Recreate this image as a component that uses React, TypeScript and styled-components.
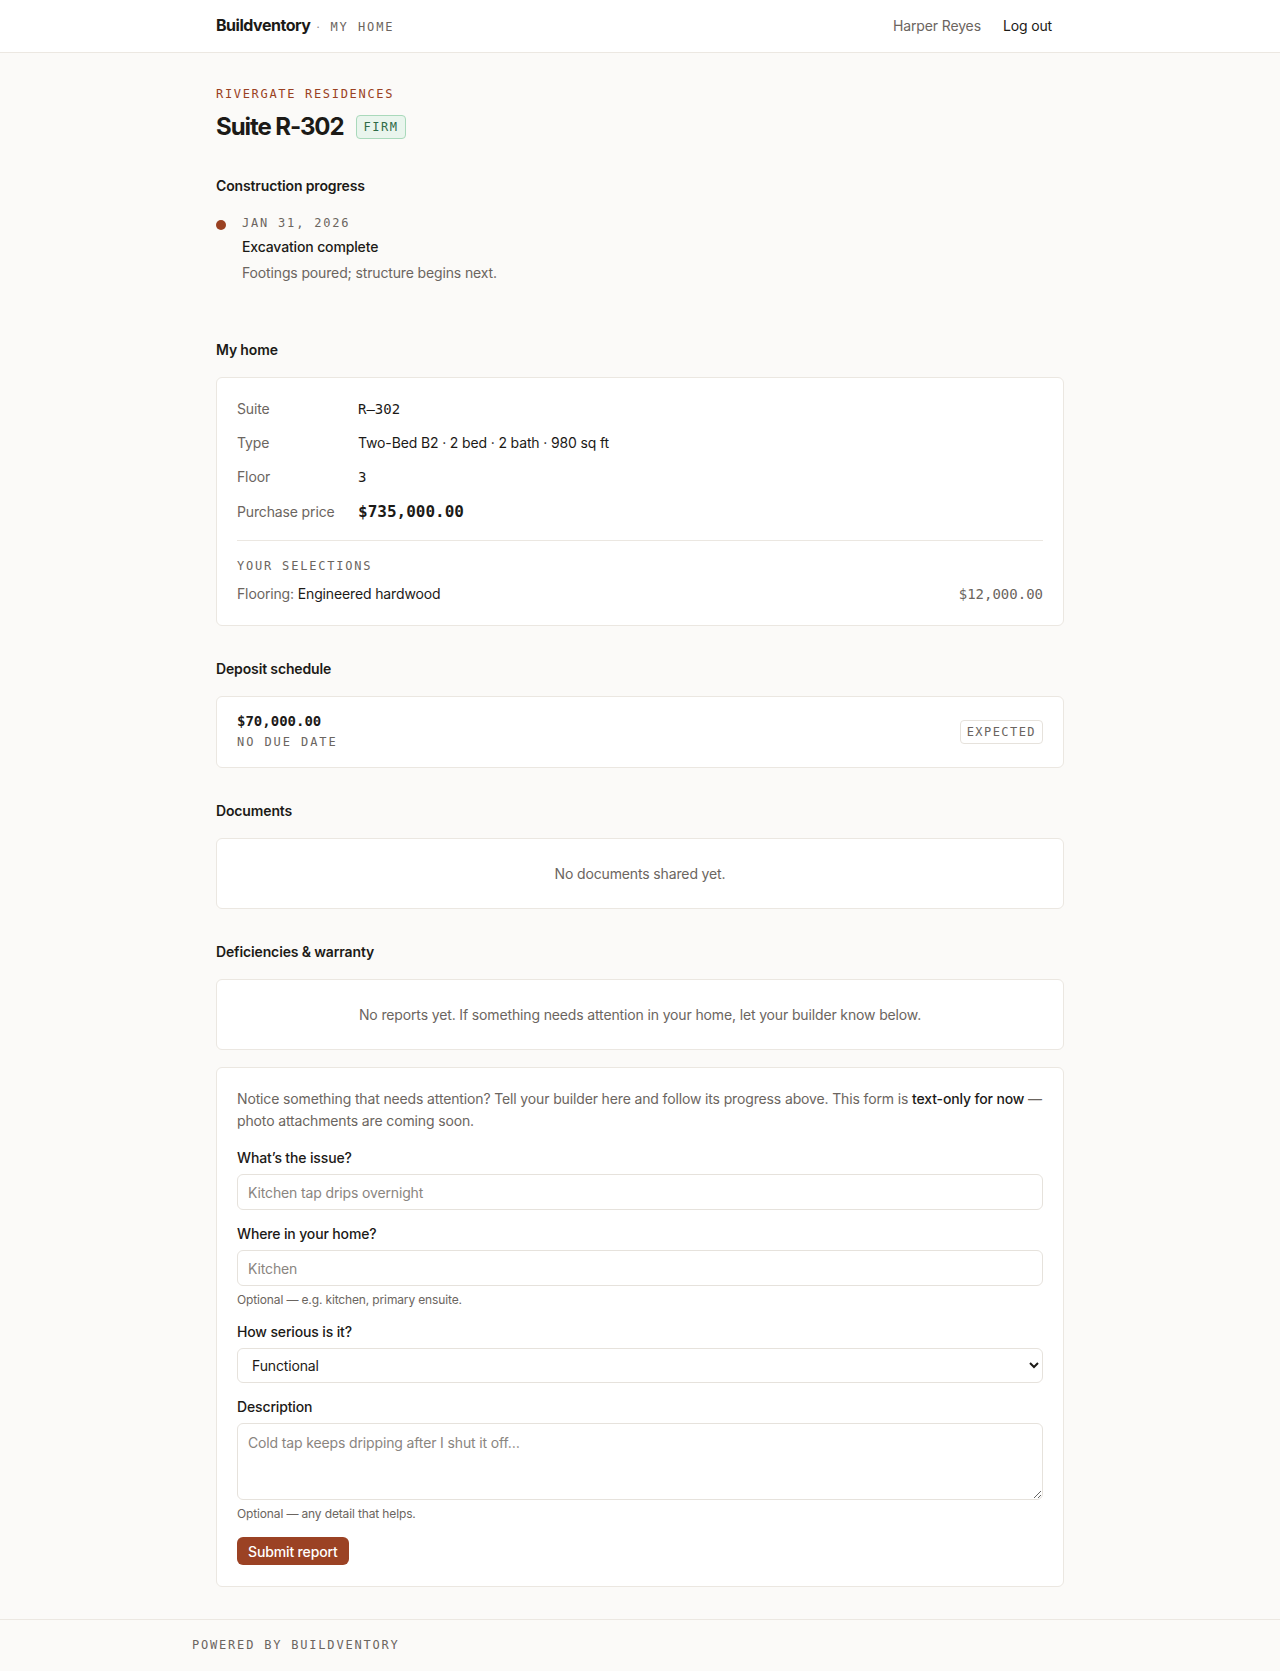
import styled, { createGlobalStyle } from 'styled-components'

const GlobalStyle = createGlobalStyle`
  * { box-sizing: border-box; }
  body {
    margin: 0;
    background: #fbfaf8;
    color: #1c1a17;
    font-family: Inter, "Noto Sans", sans-serif;
    font-size: 14px;
    line-height: 20px;
    letter-spacing: -0.01em;
  }
`

const mono = `"DejaVu Sans Mono", "Liberation Mono", monospace`

const Header = styled.header`
  background: #ffffff;
  border-bottom: 1px solid #ece8e2;
`

const HeaderInner = styled.div`
  max-width: 880px;
  margin: 0 auto;
  padding: 0 16px;
  height: 52px;
  display: flex;
  align-items: center;
  justify-content: space-between;
`

const BrandGroup = styled.div`
  display: flex;
  align-items: baseline;
  gap: 6px;
`

const Brand = styled.span`
  font-size: 16px;
  font-weight: 700;
  letter-spacing: -0.03em;
  color: #1c1a17;
`

const BrandDot = styled.span`
  font-size: 11px;
  color: #8a847d;
`

const Area = styled.span`
  font-family: ${mono};
  font-size: 12px;
  letter-spacing: 0.16em;
  color: #6b6560;
  margin-left: 5px;
`

const Nav = styled.nav`
  display: flex;
  align-items: center;
  gap: 10px;
`

const UserName = styled.span`
  color: #6b6560;
`

const LogOut = styled.a`
  color: #1c1a17;
  padding: 4px 12px;
  text-decoration: none;
  cursor: pointer;
`

const Main = styled.main`
  max-width: 880px;
  margin: 0 auto;
  padding: 32px 16px 32px;
  display: flex;
  flex-direction: column;
  gap: 33px;
`

const Intro = styled.div``

const Eyebrow = styled.div`
  font-family: ${mono};
  font-size: 12px;
  line-height: 18px;
  letter-spacing: 0.14em;
  color: #9a4122;
  margin-bottom: 8px;
`

const TitleRow = styled.div`
  display: flex;
  align-items: center;
  gap: 13px;
`

const Title = styled.h1`
  margin: 0;
  font-size: 24px;
  line-height: 32px;
  font-weight: 700;
  letter-spacing: -0.045em;
`

const Badge = styled.span<{ $tone?: 'green' | 'plain' }>`
  display: inline-flex;
  align-items: center;
  height: 24px;
  padding: 0 6px;
  border-radius: 4px;
  font-family: ${mono};
  font-size: 12px;
  letter-spacing: ${(p) => (p.$tone === 'green' ? '0.13em' : '0.12em')};
  background: ${(p) => (p.$tone === 'green' ? '#e9f5ed' : '#ffffff')};
  border: 1px solid ${(p) => (p.$tone === 'green' ? '#a9d9bb' : '#e6e2dc')};
  color: ${(p) => (p.$tone === 'green' ? '#2e6b47' : '#6b6560')};
`

const Section = styled.section``

const SectionTitle = styled.h2`
  margin: 0 0 17px;
  font-size: 14px;
  line-height: 20px;
  font-weight: 600;
  color: #1c1a17;
`

const Timeline = styled.ol`
  list-style: none;
  margin: 0;
  padding: 0 0 23px;
`

const TimelineItem = styled.li`
  display: flex;
  gap: 16px;
  padding-top: 1px;
`

const Dot = styled.span`
  width: 10px;
  height: 10px;
  border-radius: 50%;
  background: #9a4122;
  margin-top: 6px;
  flex-shrink: 0;
`

const EventBody = styled.div``

const EventDate = styled.div`
  font-family: ${mono};
  font-size: 12px;
  line-height: 18px;
  letter-spacing: 0.15em;
  color: #6b6560;
  margin-bottom: 5px;
`

const EventTitle = styled.div`
  font-weight: 500;
  color: #1c1a17;
`

const EventText = styled.p`
  margin: 5px 0 0;
  line-height: 22px;
  color: #6b6560;
`

const Stack = styled.div`
  display: flex;
  flex-direction: column;
  gap: 17px;
`

const Card = styled.div<{ $pad?: string }>`
  background: #ffffff;
  border: 1px solid #ebe7e1;
  border-radius: 6px;
  padding: ${(p) => p.$pad ?? '20px'};
`

const Facts = styled.dl`
  display: grid;
  grid-template-columns: 121px 1fr;
  row-gap: 12px;
  align-items: center;
  margin: 0;
`

const FactLabel = styled.dt`
  color: #6b6560;
  line-height: 22px;
`

const FactValue = styled.dd<{ $mono?: boolean; $big?: boolean }>`
  margin: 0;
  line-height: ${(p) => (p.$big ? '24px' : '22px')};
  font-family: ${(p) => (p.$mono ? mono : 'inherit')};
  font-size: ${(p) => (p.$big ? '16px' : '14px')};
  font-weight: ${(p) => (p.$big ? 700 : 400)};
  letter-spacing: ${(p) => (p.$mono ? '0' : 'inherit')};
  color: #1c1a17;
`

const Divider = styled.hr`
  border: none;
  border-top: 1px solid #ebe7e1;
  margin: 16px 0 16px;
`

const SubLabel = styled.div`
  font-family: ${mono};
  font-size: 12px;
  line-height: 18px;
  letter-spacing: 0.15em;
  color: #6b6560;
  margin-bottom: 8px;
`

const SelectionRow = styled.div`
  display: flex;
  justify-content: space-between;
  align-items: center;
  line-height: 22px;
`

const SelectionName = styled.span`
  color: #1c1a17;
`

const Muted = styled.span`
  color: #6b6560;
`

const Amount = styled.span`
  font-family: ${mono};
  font-size: 14px;
  letter-spacing: 0;
  color: #6b6560;
`

const DepositRow = styled.div`
  display: flex;
  justify-content: space-between;
  align-items: center;
`

const DepositAmount = styled.div`
  font-family: ${mono};
  font-size: 14px;
  font-weight: 700;
  letter-spacing: 0;
  line-height: 20px;
`

const DepositDue = styled.div`
  font-family: ${mono};
  font-size: 12px;
  line-height: 22px;
  letter-spacing: 0.16em;
  color: #6b6560;
`

const Empty = styled.div`
  text-align: center;
  color: #6b6560;
  line-height: 21px;
`

const Intro2 = styled.p`
  margin: 0 0 16px;
  line-height: 22px;
  color: #6b6560;
`

const Strong = styled.strong`
  font-weight: 500;
  color: #1c1a17;
`

const Form = styled.form`
  display: flex;
  flex-direction: column;
  gap: 14px;
`

const Field = styled.label`
  display: flex;
  flex-direction: column;
  gap: 6px;
`

const FieldLabel = styled.span`
  font-weight: 500;
  color: #1c1a17;
`

const controlBase = `
  width: 100%;
  font-family: Inter, "Noto Sans", sans-serif;
  font-size: 14px;
  letter-spacing: -0.01em;
  color: #1c1a17;
  background: #ffffff;
  border: 1px solid #e6e2dc;
  border-radius: 6px;
  outline: none;
  &::placeholder { color: #8a857f; }
`

const TextInput = styled.input`
  ${controlBase}
  height: 36px;
  padding: 0 10px;
`

const Select = styled.select`
  ${controlBase}
  height: 35px;
  padding: 0 10px;
`

const TextArea = styled.textarea`
  ${controlBase}
  display: block;
  height: 77px;
  padding: 9px 10px;
  line-height: 20px;
  resize: vertical;
`

const Hint = styled.span`
  font-size: 12px;
  line-height: 16px;
  color: #6b6560;
`

const SubmitButton = styled.button`
  align-self: flex-start;
  height: 28px;
  margin-top: 1px;
  padding: 0 11px;
  border: none;
  border-radius: 6px;
  background: #9b4224;
  color: #ffffff;
  font-family: Inter, "Noto Sans", sans-serif;
  font-size: 14px;
  font-weight: 500;
  letter-spacing: -0.01em;
  cursor: pointer;
`

const Footer = styled.footer`
  border-top: 1px solid #ece8e2;
`

const FooterInner = styled.div`
  max-width: 896px;
  margin: 0 auto;
  padding: 16px 0;
  font-family: ${mono};
  font-size: 12px;
  line-height: 18px;
  letter-spacing: 0.15em;
  color: #6b6560;
`

export default function App() {
  return (
    <>
      <GlobalStyle />
      <Header>
        <HeaderInner>
          <BrandGroup>
            <Brand>Buildventory</Brand>
            <BrandDot>·</BrandDot>
            <Area>MY HOME</Area>
          </BrandGroup>
          <Nav>
            <UserName>Harper Reyes</UserName>
            <LogOut>Log out</LogOut>
          </Nav>
        </HeaderInner>
      </Header>

      <Main>
        <Intro>
          <Eyebrow>RIVERGATE RESIDENCES</Eyebrow>
          <TitleRow>
            <Title>Suite R-302</Title>
            <Badge $tone="green">FIRM</Badge>
          </TitleRow>
        </Intro>

        <Section>
          <SectionTitle>Construction progress</SectionTitle>
          <Timeline>
            <TimelineItem>
              <Dot />
              <EventBody>
                <EventDate>JAN 31, 2026</EventDate>
                <EventTitle>Excavation complete</EventTitle>
                <EventText>Footings poured; structure begins next.</EventText>
              </EventBody>
            </TimelineItem>
          </Timeline>
        </Section>

        <Section>
          <SectionTitle>My home</SectionTitle>
          <Card>
            <Facts>
              <FactLabel>Suite</FactLabel>
              <FactValue $mono>R–302</FactValue>
              <FactLabel>Type</FactLabel>
              <FactValue>Two-Bed B2 · 2 bed · 2 bath · 980 sq ft</FactValue>
              <FactLabel>Floor</FactLabel>
              <FactValue $mono>3</FactValue>
              <FactLabel>Purchase price</FactLabel>
              <FactValue $mono $big>$735,000.00</FactValue>
            </Facts>
            <Divider />
            <SubLabel>YOUR SELECTIONS</SubLabel>
            <SelectionRow>
              <span>
                <Muted>Flooring: </Muted>
                <SelectionName>Engineered hardwood</SelectionName>
              </span>
              <Amount>$12,000.00</Amount>
            </SelectionRow>
          </Card>
        </Section>

        <Section>
          <SectionTitle>Deposit schedule</SectionTitle>
          <Card $pad="14px 20px">
            <DepositRow>
              <div>
                <DepositAmount>$70,000.00</DepositAmount>
                <DepositDue>NO DUE DATE</DepositDue>
              </div>
              <Badge>EXPECTED</Badge>
            </DepositRow>
          </Card>
        </Section>

        <Section>
          <SectionTitle>Documents</SectionTitle>
          <Card $pad="24px 20px">
            <Empty>No documents shared yet.</Empty>
          </Card>
        </Section>

        <Section>
          <SectionTitle>Deficiencies &amp; warranty</SectionTitle>
          <Stack>
            <Card $pad="24px 20px">
              <Empty>No reports yet. If something needs attention in your home, let your builder know below.</Empty>
            </Card>
            <Card $pad="20px 20px 21px">
              <Intro2>
                Notice something that needs attention? Tell your builder here and follow its progress above. This form is{' '}
                <Strong>text-only for now</Strong> — photo attachments are coming soon.
              </Intro2>
              <Form onSubmit={(e) => e.preventDefault()}>
                <Field>
                  <FieldLabel>What’s the issue?</FieldLabel>
                  <TextInput placeholder="Kitchen tap drips overnight" />
                </Field>
                <Field>
                  <FieldLabel>Where in your home?</FieldLabel>
                  <TextInput placeholder="Kitchen" />
                  <Hint>Optional — e.g. kitchen, primary ensuite.</Hint>
                </Field>
                <Field>
                  <FieldLabel>How serious is it?</FieldLabel>
                  <Select defaultValue="functional">
                    <option value="cosmetic">Cosmetic</option>
                    <option value="functional">Functional</option>
                    <option value="urgent">Urgent</option>
                  </Select>
                </Field>
                <Field>
                  <FieldLabel>Description</FieldLabel>
                  <TextArea placeholder="Cold tap keeps dripping after I shut it off…" />
                  <Hint>Optional — any detail that helps.</Hint>
                </Field>
                <SubmitButton type="submit">Submit report</SubmitButton>
              </Form>
            </Card>
          </Stack>
        </Section>
      </Main>

      <Footer>
        <FooterInner>POWERED BY BUILDVENTORY</FooterInner>
      </Footer>
    </>
  )
}
